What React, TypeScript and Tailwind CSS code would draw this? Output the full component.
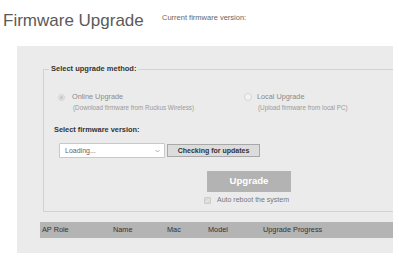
export default function App() {
  return (
    <div className="w-[399px] h-[261px] bg-white overflow-hidden font-['Liberation_Sans',Arial,sans-serif]">
      {/* header */}
      <div className="flex items-start h-[46px]">
        <div className="ml-[3px] mt-[11px] w-[159px] text-[17px] leading-[20px] text-[#5a5a5a] whitespace-nowrap">
          Firmware Upgrade
        </div>
        <div className="mt-[13px] text-[7.5px] leading-[9px] text-[#666] whitespace-nowrap">
          Current firmware version:
        </div>
      </div>

      {/* panel */}
      <div className="ml-[17px] w-[376px] h-[207px] bg-[#ebebeb] overflow-hidden pt-[18px] pl-[23px]">
        <fieldset className="ml-[3px] w-[420px] h-[148px] border border-[#d2d2d2] pl-[5px]">
          <legend className="px-[2px] text-[7.5px] leading-[10px] font-bold text-[#333] whitespace-nowrap">
            Select upgrade method:
          </legend>
          <div className="ml-[5px]">
            {/* radios */}
            <div className="flex ml-[4px] mt-[18px]">
              <div className="w-[186px]">
                <div className="flex items-center h-[10px]">
                  <span className="w-[7px] h-[7px] rounded-full border border-[#d4d4d4] bg-[#e2e2e2] flex items-center justify-center">
                    <span className="w-[3px] h-[3px] rounded-full bg-[#c4c4c4]" />
                  </span>
                  <span className="ml-[7px] text-[7.3px] leading-[10px] text-[#8a8a8a] whitespace-nowrap">Online Upgrade</span>
                </div>
                <div className="ml-[15px] mt-[1px] text-[6.3px] leading-[10px] text-[#9a9a9a] whitespace-nowrap">
                  (Download firmware from Ruckus Wireless)
                </div>
              </div>
              <div>
                <div className="flex items-center h-[10px]">
                  <span className="w-[8px] h-[8px] rounded-full border border-[#d6d6d6] bg-[#f2f2f2]" />
                  <span className="ml-[5px] text-[7.3px] leading-[10px] text-[#8a8a8a] whitespace-nowrap">Local Upgrade</span>
                </div>
                <div className="ml-[14px] mt-[1px] text-[6.3px] leading-[10px] text-[#9a9a9a] whitespace-nowrap">
                  (Upload firmware from local PC)
                </div>
              </div>
            </div>

            <div className="mt-[12px] text-[7.4px] leading-[10px] font-bold text-[#333] whitespace-nowrap">
              Select firmware version:
            </div>

            <div className="flex items-center mt-[8px] ml-[5px]">
              <div className="w-[106px] h-[15px] bg-white border border-[#c8c8c8] rounded-[1px] flex items-center justify-between pl-[5px] pr-[4px]">
                <span className="text-[7px] leading-[10px] text-[#666]">Loading...</span>
                <svg width="5" height="4" viewBox="0 0 5 4">
                  <path d="M0.5 1 L2.5 3 L4.5 1" fill="none" stroke="#999" strokeWidth="0.8" />
                </svg>
              </div>
              <div className="ml-[2px] w-[93px] h-[13px] bg-[#dcdcdc] border border-[#a8a8a8] flex items-center justify-center text-[7px] leading-[10px] font-bold text-[#333] whitespace-nowrap">
                Checking for updates
              </div>
            </div>

            <div className="mt-[13px] ml-[153px] w-[84px] h-[21px] bg-[#b3b3b3] flex items-center justify-center text-[9.6px] font-bold text-white">
              Upgrade
            </div>

            <div className="flex items-center mt-[3px] ml-[150px] h-[10px]">
              <span className="w-[7px] h-[7px] rounded-[1px] bg-[#d9d9d9] border border-[#cdcdcd] flex items-center justify-center">
                <svg width="5" height="5" viewBox="0 0 5 5">
                  <path d="M0.8 2.6 L2 3.7 L4.2 1.2" fill="none" stroke="#f4f4f4" strokeWidth="0.9" />
                </svg>
              </span>
              <span className="ml-[6px] text-[7px] leading-[10px] text-[#777] whitespace-nowrap">Auto reboot the system</span>
            </div>
          </div>
        </fieldset>

        {/* table header */}
        <div className="mt-[10px] w-[400px] h-[16px] bg-[#b4b4b4] flex items-center pl-[2px] text-[7.3px] text-[#333] whitespace-nowrap">
          <div className="w-[71px]">AP Role</div>
          <div className="w-[54px]">Name</div>
          <div className="w-[41px]">Mac</div>
          <div className="w-[55px]">Model</div>
          <div>Upgrade Progress</div>
        </div>
      </div>
    </div>
  );
}
